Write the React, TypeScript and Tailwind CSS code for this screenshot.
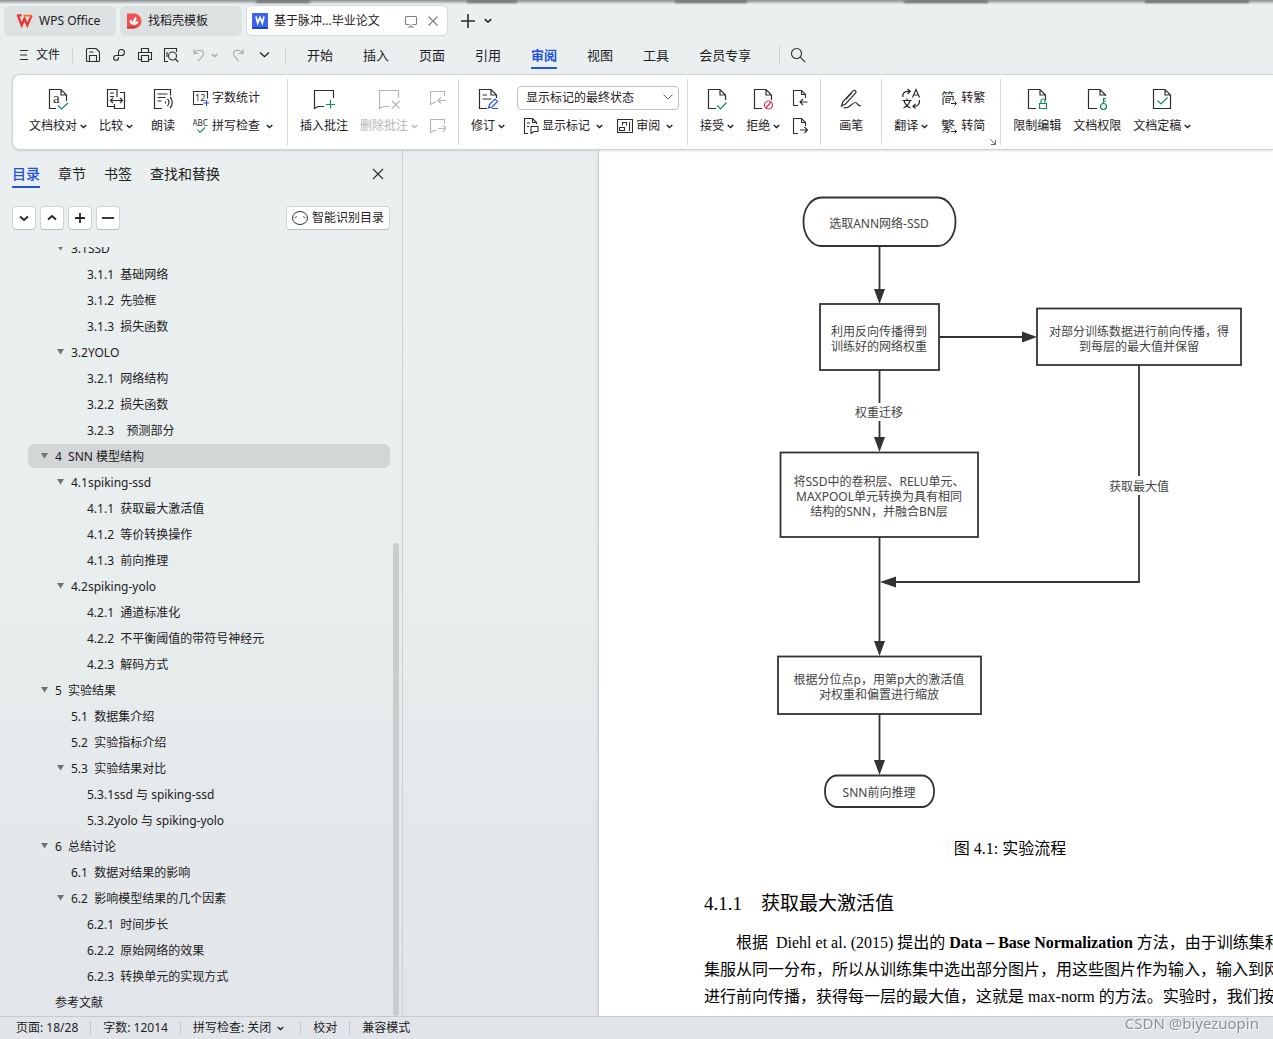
import type { ReactNode } from "react";

type IconProps = { children: ReactNode; color?: string };

const Icon = ({ children, color = "text-[#2b2e30]" }: IconProps) => (
  <svg viewBox="0 0 24 24" className={`size-6 ${color} shrink-0`} fill="none" stroke="currentColor" strokeWidth="1.2">
    {children}
  </svg>
);

const SmallIcon = ({ children, color = "text-[#2b2e30]" }: IconProps) => (
  <svg viewBox="0 0 16 16" className={`size-4 ${color} shrink-0`} fill="none" stroke="currentColor" strokeWidth="1.1">
    {children}
  </svg>
);

const Chevron = ({ className = "w-[7px]", weight = 1.3 }: { className?: string; weight?: number }) => (
  <svg viewBox="0 0 7 5" className={`${className} shrink-0`} fill="none" stroke="currentColor" strokeWidth={weight}>
    <path d="M.7 1 3.5 3.6 6.3 1" />
  </svg>
);

const Divider = () => <div className="my-1 w-px shrink-0 bg-[#d5d8d9]" />;

type BigProps = { label: string; icon: ReactNode; menu?: boolean; disabled?: boolean; className?: string };

const BigButton = ({ label, icon, menu, disabled, className = "" }: BigProps) => (
  <button
    disabled={disabled}
    className={`flex shrink-0 flex-col items-center whitespace-nowrap ${disabled ? "text-[#b3b5b6]" : ""} ${className}`}
  >
    <span className="flex h-7 items-center">{icon}</span>
    <span className="flex h-7 items-center gap-[3px]">
      {label}
      {menu && <Chevron />}
    </span>
  </button>
);

const RowButton = ({ label, icon, menu }: BigProps) => (
  <button className="flex h-7 items-center gap-[3px] whitespace-nowrap">
    {icon}
    {label}
    {menu && (
      <span className="pl-[3px]">
        <Chevron />
      </span>
    )}
  </button>
);

const Group = ({ children, className = "px-3" }: { children: ReactNode; className?: string }) => (
  <div className={`flex shrink-0 gap-3 pt-[9px] ${className}`}>{children}</div>
);

const greenStroke = "#128a63";

const Titlebar = () => (
  <header className="flex h-9 shrink-0 items-end gap-1">
    <button className="ml-1 flex h-[30px] w-28 items-center gap-1.5 rounded-md bg-[#dce1e2] pl-3">
      <svg viewBox="0 0 18 14" className="w-[17px]" fill="none">
        <path d="M1 1.5h5M2 1.5 6 12l3-7 3 7 4.500-10.500" stroke="#f0322d" strokeWidth="2.400" />
        <path d="M8 1.700h9" stroke="#ff6a2b" strokeWidth="2" />
      </svg>
      WPS Office
    </button>
    <button className="flex h-[30px] w-[122px] items-center gap-1.5 rounded-md bg-[#dce1e2] pl-1.5">
      <svg viewBox="0 0 16 16" className="size-4">
        <path d="M1 .5h7a7.500 7.500 0 0 1 0 15H1z" fill="#f0504e" />
        <path d="M1 13.500h11L8 15.500H1z" fill="#c9302f" />
        <path d="M7.500 12C3.500 11 3.500 8.500 4 6.500c2 .8 3 2 3 3.500C6.800 7 8 5 10 3.500c.8 2.500.3 4.500-1 6 1-.8 2-1.200 3.500-1.200C12 10.800 10.500 12 7.500 12z" fill="#fff" />
      </svg>
      找稻壳模板
    </button>
    <div className="flex h-[31px] w-[202px] items-center rounded-md border border-[#d5dadb] bg-white pl-[5px]">
      <svg viewBox="0 0 16 16" className="mr-1.5 size-4">
        <rect width="16" height="16" rx="1" fill="#3c63f0" />
        <path d="M0 14h16v1a1 1 0 0 1-1 1H1a1 1 0 0 1-1-1z" fill="#1f43cf" />
        <path d="m4 3.500 1.700 6.500L8 4.500l2.300 5.500L12 3.500" fill="none" stroke="#fff" strokeWidth="1.700" />
      </svg>
      <span className="flex-1 whitespace-nowrap">基于脉冲...毕业论文</span>
      <button aria-label="窗口" className="mr-1.5">
        <SmallIcon color="text-[#7c8082]">
          <path d="M6.500 11.500h-3a1 1 0 0 1-1-1v-6a1 1 0 0 1 1-1h9a1 1 0 0 1 1 1v6a1 1 0 0 1-1 1h-3M8 11.500v2.500M5 14h6" />
        </SmallIcon>
      </button>
      <button aria-label="关闭标签" className="mr-1.5">
        <SmallIcon color="text-[#7c8082]">
          <path d="m3.500 3.500 9 9m0-9-9 9" />
        </SmallIcon>
      </button>
    </div>
    <button aria-label="新建" className="ml-2 flex h-[31px] items-center">
      <SmallIcon>
        <path d="M8 1v14M1 8h14" strokeWidth="1.600" />
      </SmallIcon>
    </button>
    <button aria-label="标签列表" className="ml-1 flex h-[31px] items-center">
      <Chevron className="w-2" />
    </button>
  </header>
);

const menus = ["开始", "插入", "页面", "引用", "审阅", "视图", "工具", "会员专享"];

const Menubar = () => (
  <nav className="flex h-[38px] shrink-0 items-center">
    <button className="ml-4 flex items-center gap-1 whitespace-nowrap">
      <SmallIcon>
        <path d="M4 3.500h8M4 8h7M4 12.500h8" />
      </SmallIcon>
      文件
    </button>
    <div className="ml-3 h-4 w-px bg-[#cdd1d2]" />
    <div className="ml-3 flex items-center gap-2.5">
      <button aria-label="保存">
        <SmallIcon>
          <path d="M2.500 1.500h8.500l3.500 3.500v8.500a1 1 0 0 1-1 1h-11a1 1 0 0 1-1-1v-11a1 1 0 0 1 1-1zM4.500 14.500V8.500h7v6M4.500 5h4" />
        </SmallIcon>
      </button>
      <button aria-label="分享">
        <SmallIcon>
          <path d="M7.500 8.500V5a3 3 0 1 1 3 3.500H5a2.400 2.400 0 1 0 2.500 2.400V10" />
        </SmallIcon>
      </button>
      <button aria-label="打印">
        <SmallIcon>
          <path d="M4.500 5V1.500h7V5M4.500 12.500h-3v-7h13v7h-3M4.500 8.500h7v6h-7z" />
        </SmallIcon>
      </button>
      <button aria-label="打印预览">
        <SmallIcon>
          <path d="M5 14.500H1.500v-13h12V5" />
          <circle cx="9.500" cy="9" r="4" />
          <path d="m12.300 12 3 3M4 5v5" />
        </SmallIcon>
      </button>
      <div className="ml-0.5 flex items-center gap-1 text-[#a4a8aa]">
        <button aria-label="撤销">
          <SmallIcon color="text-[#a4a8aa]">
            <path d="M3 2v4.500h4.500M3 6.500C5.500 2.500 12.500 2 12.500 6.500c0 3-3.500 5-5.500 7.500" />
          </SmallIcon>
        </button>
        <Chevron />
      </div>
      <button aria-label="重做" className="ml-0.5">
        <SmallIcon color="text-[#a4a8aa]">
          <path d="M13 2v4.500H8.500M13 6.500C10.500 2.500 3.500 2 3.500 6.500c0 3 3.500 5 5 7.500" />
        </SmallIcon>
      </button>
      <button aria-label="更多" className="ml-0.5 px-px">
        <Chevron className="w-[11px]" weight={0.9} />
      </button>
    </div>
    <div className="ml-3.5 h-4 w-px bg-[#cdd1d2]" />
    <div className="ml-[21px] flex h-full items-center gap-[30px] text-[13px]">
      {menus.map((m) => (
        <button
          key={m}
          className={`flex h-7 items-center whitespace-nowrap border-b-2 pt-0.5 ${
            m === "审阅" ? "border-[#2151e0] font-bold text-[#2151e0]" : "border-transparent"
          }`}
        >
          {m}
        </button>
      ))}
    </div>
    <div className="ml-7 h-5 w-px bg-[#cdd1d2]" />
    <button aria-label="搜索" className="ml-2.5">
      <SmallIcon>
        <circle cx="6.500" cy="6.500" r="5" />
        <path d="m10.200 10.200 5 5" />
      </SmallIcon>
    </button>
  </nav>
);

const docPath = "M11 22.500H3.500v-19H15l5.500 5.500v5M15 3.500V9h5.500";

const Ribbon = () => (
  <section className="relative z-10 ml-3 flex h-[76px] shrink-0 overflow-hidden rounded-l-lg border border-r-0 border-[#cfd3d4] bg-white shadow-sm">
    <Group className="pl-4 pr-3.5">
      <BigButton
        label="文档校对"
        menu
        icon={
          <Icon>
            <path d="M10 22.500H3.500v-19H15l5.500 5.500v6M15 3.500V9h5.500" />
            <text x="7" y="17" className="font-['Liberation_Serif']" fontSize="15" fill="currentColor" stroke="none">
              a
            </text>
            <path d="m12 19.500 3.500 3.500 6.500-6" stroke={greenStroke} />
          </Icon>
        }
      />
      <BigButton
        label="比较"
        menu
        icon={
          <Icon>
            <path d="M10.500 20.500h-7v-17h9.500v7.500M6 7h4M6 10.500h4M16 6.500h4.500v16h-10v-4.500M6.500 14.500h12M9 12l-2.500 2.500L9 17M16 12l2.500 2.500L16 17" />
          </Icon>
        }
      />
      <BigButton
        label="朗读"
        className="px-1.5"
        icon={
          <Icon>
            <path d="M11 22.500H3.500v-19h16v6M6.500 8h10M6.500 11.500h8M6.500 15h4M14.500 15.500v2M16.500 13c2 1.500 2 5 0 7M19 11c3 3 3 8 0 11" />
          </Icon>
        }
      />
      <div className="flex flex-col">
        <RowButton
          label="字数统计"
          icon={
            <SmallIcon>
              <path d="M10 14.500H.5v-13h14v7" />
              <text x="2" y="11" fontSize="9" fill="currentColor" stroke="none">
                12
              </text>
              <path d="M13.500 10v6M10.500 13h6" stroke="#2151e0" />
            </SmallIcon>
          }
        />
        <RowButton
          label="拼写检查"
          menu
          icon={
            <SmallIcon>
              <text x="-.5" y="8" fontSize="8" fill="currentColor" stroke="none">
                ABC
              </text>
              <path d="m4.500 11.500 2.500 3 5-5" stroke={greenStroke} />
            </SmallIcon>
          }
        />
      </div>
    </Group>
    <Divider />
    <Group>
      <BigButton
        label="插入批注"
        icon={
          <Icon>
            <path d="M12 20.500H6l-3.500 2V4.500h19V12" />
            <path d="M18.500 14v8.500M14 18.500h9" stroke={greenStroke} />
          </Icon>
        }
      />
      <BigButton
        label="删除批注"
        menu
        disabled
        icon={
          <Icon color="text-[#b3b5b6]">
            <path d="M12 20.500H6l-3.500 2V4.500h19V12M15 15l7.500 7.500M22.500 15 15 22.500" />
          </Icon>
        }
      />
      <div className="flex flex-col">
        <button disabled aria-label="上一条批注" className="flex h-7 items-center">
          <SmallIcon color="text-[#b3b5b6]">
            <path d="M6 12.500H4L.5 14.500v-13h14V6M16 10.500H8M11 7.500l-3 3 3 3" />
          </SmallIcon>
        </button>
        <button disabled aria-label="下一条批注" className="flex h-7 items-center">
          <SmallIcon color="text-[#b3b5b6]">
            <path d="M6 12.500H4L.5 14.500v-13h14V6M8 10.500h8M13 7.500l3 3-3 3" />
          </SmallIcon>
        </button>
      </div>
    </Group>
    <Divider />
    <Group className="pl-3 pr-2">
      <BigButton
        label="修订"
        menu
        icon={
          <Icon>
            <path d="M11 22.500H3.500v-19H15l5.500 5.500v3M15 3.500V9h5.500M6.500 9H11M6.500 13h9" />
            <path d="m12.500 22 1-3.500 5.500-5.500 2.500 2.500-5.500 5.500zM16 22.500h6" stroke="#2151e0" />
          </Icon>
        }
      />
      <div className="flex w-[162px] flex-col">
        <div className="flex h-7 items-center">
          <div className="relative w-full">
            <select
              aria-label="显示标记的状态"
              className="block h-6 w-full appearance-none rounded border border-[#bfc3c4] bg-white pl-2 leading-5"
            >
              <option>显示标记的最终状态</option>
            </select>
            <span className="pointer-events-none absolute right-1.5 top-2 text-[#606365]">
              <svg viewBox="0 0 10 6" className="w-[10px]" fill="none" stroke="currentColor">
                <path d="m.5.5 4.500 4.500L9.500.5" />
              </svg>
            </span>
          </div>
        </div>
        <div className="flex gap-3.5 pl-1.5">
          <RowButton
            label="显示标记"
            menu
            icon={
              <SmallIcon>
                <path d="M5 15.500H1.500V.5h8l4 4V6M9.500.5v4h4M4 5h3M4 8.500h2M8 8.500h7v5h-4l-3 2z" />
              </SmallIcon>
            }
          />
          <RowButton
            label="审阅"
            menu
            icon={
              <SmallIcon>
                <path d="M.5 1.500h15v13H.5zM2.500 12.500h5v-3h-5zM5.500 7.500V4.500h4v3M12.500 4v9" />
              </SmallIcon>
            }
          />
        </div>
      </div>
    </Group>
    <Divider />
    <Group>
      <BigButton
        label="接受"
        menu
        icon={
          <Icon>
            <path d={docPath} />
            <path d="m12 19.500 3.500 3.500 6-6.500" stroke={greenStroke} />
          </Icon>
        }
      />
      <BigButton
        label="拒绝"
        menu
        icon={
          <Icon>
            <path d={docPath} />
            <g stroke="#d3365a">
              <circle cx="17.500" cy="19" r="4" fill="#fff" />
              <path d="m15 22 5-6" />
            </g>
          </Icon>
        }
      />
      <div className="flex flex-col">
        <button aria-label="上一条修订" className="flex h-7 items-center">
          <SmallIcon>
            <path d="M6 15.500H1.500V.5h8l4 4V8M9.500.5v4h4M15.500 12H8M11 9l-3 3 3 3" />
          </SmallIcon>
        </button>
        <button aria-label="下一条修订" className="flex h-7 items-center">
          <SmallIcon>
            <path d="M6 15.500H1.500V.5h8l4 4V8M9.500.5v4h4M8 12h7.500M12.500 9l3 3-3 3" />
          </SmallIcon>
        </button>
      </div>
    </Group>
    <Divider />
    <Group className="px-[18px]">
      <BigButton
        label="画笔"
        icon={
          <Icon>
            <path d="m2.500 20 1.500-4.500L14 4.800a1.700 1.700 0 0 1 2.500 2.400L6.500 18zM13 6.500 7 13M4.500 21.500c6 2 8-5 12-5 2.500 0 1 3.500 5.500 3.500" />
          </Icon>
        }
      />
    </Group>
    <Divider />
    <Group className="relative pl-3 pr-[15px]">
      <BigButton
        label="翻译"
        menu
        icon={
          <Icon>
            <path d="M4 11c-1-4 2-6 7-5.500M8.500 3l2.800 2.500L8.500 8M20.500 14c.5 4-1.500 6-6 6.500M16.500 18l-2.500 2.500 2.500 2" />
            <path d="m13.500 11.500 3.500-8 3.500 8M14.500 9h5" />
            <path d="M3.500 14.500h9M8 12.500v2M5 14.500c1 4 3 6 6.500 7.500M11 14.500c-1 4-3 6-6.500 7.500" />
          </Icon>
        }
      />
      <div className="flex flex-col">
        {[
          { from: "简", label: "转繁" },
          { from: "繁", label: "转简" },
        ].map((c) => (
          <RowButton
            key={c.label}
            label={c.label}
            icon={
              <svg viewBox="0 0 18 18" className="size-[18px] shrink-0" fill="none" stroke="#2b2e30">
                <text x="1" y="14" fontSize="14" fill="#2b2e30" stroke="none">
                  {c.from}
                </text>
                <path d="M10 14h8" stroke="#fff" strokeWidth="5" />
                <path d="M11 14.500h5.500M14.500 12.500l2 2-2 2" />
              </svg>
            }
          />
        ))}
      </div>
      <button aria-label="更多设置" className="absolute bottom-1 right-1">
        <svg viewBox="0 0 6 6" className="size-1.5" fill="none" stroke="#63676a">
          <path d="m.5.500 4.500 4.500M5.500 1v4.500H1" />
        </svg>
      </button>
    </Group>
    <Divider />
    <Group>
      <BigButton
        label="限制编辑"
        icon={
          <Icon>
            <path d={docPath} />
            <path d="M14.500 17.500h7v5h-7zM16 17.500V15a2 2 0 0 1 4 0v2.500" stroke={greenStroke} fill="#fff" />
          </Icon>
        }
      />
      <BigButton
        label="文档权限"
        icon={
          <Icon>
            <path d="M12 22.500H3.500v-19H15l5.500 5.500v1M15 3.500V9h5.500" />
            <g stroke={greenStroke}>
              <circle cx="18.500" cy="20.500" r="3" />
              <path d="M18.500 17.500V12.500h2.500M18.500 15h2.500" />
            </g>
          </Icon>
        }
      />
      <BigButton
        label="文档定稿"
        menu
        icon={
          <Icon>
            <path d="M3.500 3.500H15l5.500 5.500v13.500h-17zM15 3.500V9h5.500" />
            <path d="m7.500 14.500 3.500 3.500 6.500-6.500" stroke={greenStroke} />
          </Icon>
        }
      />
    </Group>
  </section>
);

const outline = [
  { level: 1, text: "3.1SSD", open: true },
  { level: 2, text: "3.1.1  基础网络" },
  { level: 2, text: "3.1.2  先验框" },
  { level: 2, text: "3.1.3  损失函数" },
  { level: 1, text: "3.2YOLO", open: true },
  { level: 2, text: "3.2.1  网络结构" },
  { level: 2, text: "3.2.2  损失函数" },
  { level: 2, text: "3.2.3    预测部分" },
  { level: 0, text: "4  SNN 模型结构", open: true, active: true },
  { level: 1, text: "4.1spiking-ssd", open: true },
  { level: 2, text: "4.1.1  获取最大激活值" },
  { level: 2, text: "4.1.2  等价转换操作" },
  { level: 2, text: "4.1.3  前向推理" },
  { level: 1, text: "4.2spiking-yolo", open: true },
  { level: 2, text: "4.2.1  通道标准化" },
  { level: 2, text: "4.2.2  不平衡阈值的带符号神经元" },
  { level: 2, text: "4.2.3  解码方式" },
  { level: 0, text: "5  实验结果", open: true },
  { level: 1, text: "5.1  数据集介绍" },
  { level: 1, text: "5.2  实验指标介绍" },
  { level: 1, text: "5.3  实验结果对比", open: true },
  { level: 2, text: "5.3.1ssd 与 spiking-ssd" },
  { level: 2, text: "5.3.2yolo 与 spiking-yolo" },
  { level: 0, text: "6  总结讨论", open: true },
  { level: 1, text: "6.1  数据对结果的影响" },
  { level: 1, text: "6.2  影响模型结果的几个因素", open: true },
  { level: 2, text: "6.2.1  时间步长" },
  { level: 2, text: "6.2.2  原始网络的效果" },
  { level: 2, text: "6.2.3  转换单元的实现方式" },
  { level: 0, text: "参考文献" },
];

const indents = ["pl-3", "pl-7", "pl-11"];

const toolPaths = [
  { label: "展开", d: "m3 5.500 4 3.500 4-3.500" },
  { label: "收起", d: "m3 8.500 4-3.500 4 3.500" },
  { label: "增加级别", d: "M7 2v10M2 7h10" },
  { label: "降低级别", d: "M1 7h12" },
];

const Sidebar = () => (
  <aside className="relative flex w-[403px] shrink-0 flex-col border-r border-[#cfcfd2]">
    <div className="flex items-start gap-[18px] pl-3 pt-3 text-[14px] leading-6">
      <button className="border-b-2 border-[#2151e0] font-medium text-[#2151e0]">目录</button>
      <button>章节</button>
      <button>书签</button>
      <button>查找和替换</button>
      <button aria-label="关闭" className="ml-auto mr-4 mt-1">
        <SmallIcon>
          <path d="m3 3 10 10m0-10L3 13" />
        </SmallIcon>
      </button>
    </div>
    <div className="mt-[18px] flex items-center gap-1 px-3">
      {toolPaths.map((t) => (
        <button
          key={t.label}
          aria-label={t.label}
          className="flex size-6 items-center justify-center rounded border border-[#d0d4d5] border-b-[#b9bdbe] bg-white"
        >
          <svg viewBox="0 0 14 14" className="size-3.5" fill="none" stroke="#25282a" strokeWidth="1.800">
            <path d={t.d} />
          </svg>
        </button>
      ))}
      <button className="ml-auto flex h-6 items-center gap-1 rounded border border-[#d0d4d5] border-b-[#b9bdbe] bg-white px-[5px]">
        <svg viewBox="0 0 16 16" className="size-4" fill="none">
          <ellipse cx="8" cy="8" rx="7.500" ry="6.500" stroke="#2b2e30" />
          <path d="M2.500 8 5 6.500M11 6.500 13.500 8" stroke="#2151e0" />
        </svg>
        智能识别目录
      </button>
    </div>
    <div className="mt-[17px] min-h-0 flex-1 overflow-hidden">
      <ul className="-mt-3 pl-7 pr-3">
        {outline.map((item) => (
          <li key={item.text} className="flex h-[26px] items-center">
            <button
              className={`flex h-6 w-full items-center whitespace-pre rounded-md ${indents[item.level]} ${
                item.active ? "bg-[#d2d6d6]" : ""
              }`}
            >
              <svg viewBox="0 0 9 6" className="mr-1.5 w-[9px]">
                {item.open && <path d="M1 0h7L4.500 5.500z" fill="#6e7274" />}
              </svg>
              <span className="pt-0.5">{item.text}</span>
            </button>
          </li>
        ))}
      </ul>
    </div>
    <div className="absolute bottom-0 right-[3px] h-[473px] w-1.5 rounded-full bg-[#c9cdce]" />
  </aside>
);

const shapes = [
  { x: 803.5, y: 197.5, w: 152, h: 48.5, rx: 18, ry: 24 },
  { x: 820, y: 304, w: 119, h: 66 },
  { x: 1037, y: 308.5, w: 204, h: 56.5 },
  { x: 780.5, y: 452.5, w: 197.5, h: 84.5 },
  { x: 778, y: 656.5, w: 203, h: 57.5 },
  { x: 825, y: 775.5, w: 109, h: 31.5, rx: 12, ry: 15 },
];

const captions = [
  { x: 879, y: 228, text: "选取ANN网络-SSD" },
  { x: 879, y: 336, text: "利用反向传播得到" },
  { x: 879, y: 351, text: "训练好的网络权重" },
  { x: 1139, y: 336, text: "对部分训练数据进行前向传播，得" },
  { x: 1139, y: 351, text: "到每层的最大值并保留" },
  { x: 879, y: 417, text: "权重迁移" },
  { x: 1139, y: 491, text: "获取最大值" },
  { x: 879, y: 486, text: "将SSD中的卷积层、RELU单元、" },
  { x: 879, y: 501, text: "MAXPOOL单元转换为具有相同" },
  { x: 879, y: 516, text: "结构的SNN，并融合BN层" },
  { x: 879, y: 684, text: "根据分位点p，用第p大的激活值" },
  { x: 879, y: 699, text: "对权重和偏置进行缩放" },
  { x: 879, y: 797, text: "SNN前向推理" },
];

const Flowchart = () => (
  <svg viewBox="770 190 480 625" className="ml-[171px] h-[625px] w-[480px]">
    <g fill="none" stroke="#333" strokeWidth="1.800">
      {shapes.map((s) => (
        <rect key={s.y} x={s.x} y={s.y} width={s.w} height={s.h} rx={s.rx} ry={s.ry} />
      ))}
      <path d="M879.500 246v50M939 337h90M879.500 370v33M879.500 421v22M1139 365v111M1139 495v87H890M879.500 537v108M879.500 714v52" />
    </g>
    <path
      fill="#333"
      d="M874 289h11l-5.500 15zM1022 331.500v11l15-5.500zM874 437h11l-5.500 15zM896 576.500v11l-16-5.500zM874 641h11l-5.500 15zM874 760h11l-5.500 15z"
    />
    <g fontSize="12" fill="#444" textAnchor="middle">
      {captions.map((c) => (
        <text key={c.text} x={c.x} y={c.y}>
          {c.text}
        </text>
      ))}
    </g>
  </svg>
);

const Page = () => (
  <main className="min-w-0 flex-1 overflow-hidden pl-[195px]">
    <article className="h-full overflow-hidden border-l border-[#cdd0d2] bg-white pt-10 font-['Liberation_Serif','Noto_Sans_CJK_SC',serif] text-black shadow-md">
      <div className="font-['Noto_Sans','Noto_Sans_CJK_SC',sans-serif]">
        <Flowchart />
      </div>
      <div className="w-[717px] whitespace-pre pl-[105px] text-[16px] leading-[27px]">
        <p className="mt-5 text-center">图 4.1: 实验流程</p>
        <h2 className="mb-3 mt-7 text-[19px]">4.1.1　获取最大激活值</h2>
        <p className="pl-8">
          根据  Diehl et al. (2015) 提出的 <b>Data – Base Normalization</b> 方法，由于训练集和测试
        </p>
        <p>集服从同一分布，所以从训练集中选出部分图片，用这些图片作为输入，输入到网络</p>
        <p>进行前向传播，获得每一层的最大值，这就是 max-norm 的方法。实验时，我们按前</p>
      </div>
    </article>
  </main>
);

const Statusbar = () => (
  <footer className="flex h-[23px] shrink-0 items-center gap-3 whitespace-nowrap border-t border-[#c6cacc] pl-4">
    <span>页面: 18/28</span>
    <div className="h-3.5 w-px bg-[#c6cacc]" />
    <span>字数: 12014</span>
    <div className="h-3.5 w-px bg-[#c6cacc]" />
    <button className="flex items-center gap-1.5">
      拼写检查: 关闭
      <Chevron />
    </button>
    <div className="ml-1 h-3.5 w-px bg-[#c6cacc]" />
    <button>校对</button>
    <div className="h-3.5 w-px bg-[#c6cacc]" />
    <span>兼容模式</span>
  </footer>
);

// shadows of the window that sits above this one
const TopEdge = () => (
  <div className="absolute inset-x-0 top-0 flex h-1 justify-between bg-linear-to-b from-[#8b8e8e] to-[#e4e9e9] pl-64 pr-6">
    <div className="h-[3px] w-[54px] bg-[#6f7272] blur-[1px]" />
    <div className="h-[3px] w-[50px] bg-[#6f7272] blur-[1px]" />
    <div className="h-[3px] w-[72px] bg-[#6f7272] blur-[1px]" />
    <div className="h-[3px] w-[84px] bg-[#6f7272] blur-[1px]" />
    <div className="h-[3px] w-[104px] bg-[#6f7272] blur-[1px]" />
  </div>
);

const App = () => {
  return (
    <div className="relative flex h-screen flex-col overflow-hidden bg-linear-to-b from-[#eaf0f0] via-[#e9eeee] to-[#e1e5e9] font-['Noto_Sans','Noto_Sans_CJK_SC',sans-serif] text-[12px] leading-4 text-[#1d2022]">
      <TopEdge />
      <Titlebar />
      <Menubar />
      <Ribbon />
      <div className="flex min-h-0 flex-1">
        <Sidebar />
        <Page />
      </div>
      <Statusbar />
      <div className="absolute bottom-1.5 right-3.5 text-[15px] leading-5 text-[#8f9294] drop-shadow-[1px_1px_0_#fff]">
        CSDN @biyezuopin
      </div>
    </div>
  );
};

export default App;
